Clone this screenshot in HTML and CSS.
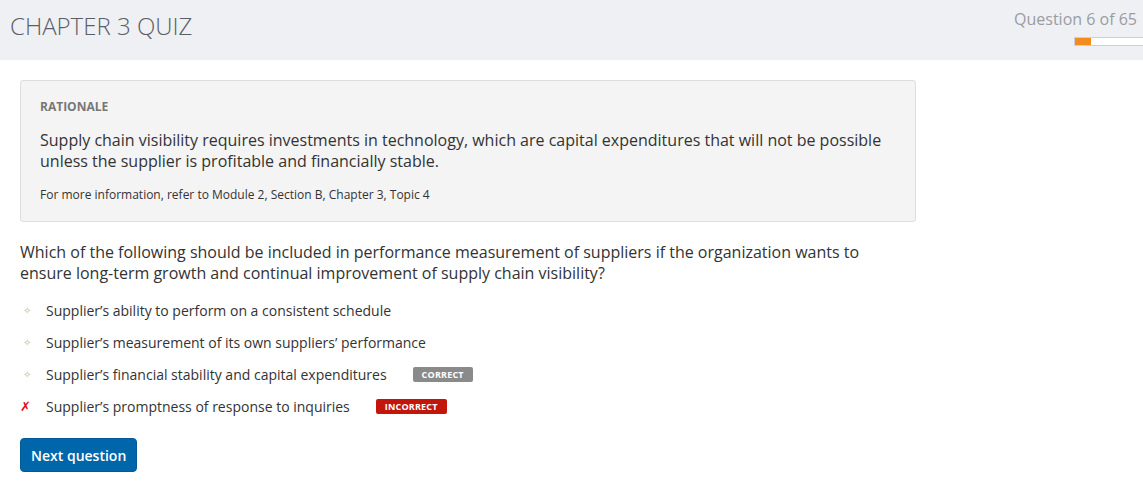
FILE: index.html
```html
<!DOCTYPE html>
<html>
<head>
<meta charset="utf-8">
<link rel="stylesheet" href="styles.css">
</head>
<body>
<header class="topbar">
  <h1 class="title">CHAPTER 3 QUIZ</h1>
  <div class="progress-wrap">
    <div class="progress-label">Question 6 of 65</div>
    <div class="progress"><div class="progress-fill" style="width:16px"></div></div>
  </div>
</header>
<main class="content">
  <section class="rationale">
    <div class="rationale-head">RATIONALE</div>
    <p class="rationale-text">Supply chain visibility requires investments in technology, which are capital expenditures that will not be possible unless the supplier is profitable and financially stable.</p>
    <p class="rationale-ref">For more information, refer to Module 2, Section B, Chapter 3, Topic 4</p>
  </section>
  <p class="question">Which of the following should be included in performance measurement of suppliers if the organization wants to ensure long-term growth and continual improvement of supply chain visibility?</p>
  <ul class="options">
    <li class="option"><span class="mark dot">&#x2727;</span><span class="opt-text">Supplier’s ability to perform on a consistent schedule</span></li>
    <li class="option"><span class="mark dot">&#x2727;</span><span class="opt-text">Supplier’s measurement of its own suppliers’ performance</span></li>
    <li class="option"><span class="mark dot">&#x2727;</span><span class="opt-text">Supplier’s financial stability and capital expenditures</span><span class="badge badge-correct">CORRECT</span></li>
    <li class="option"><span class="mark cross">&#x2717;</span><span class="opt-text">Supplier’s promptness of response to inquiries</span><span class="badge badge-incorrect">INCORRECT</span></li>
  </ul>
  <button class="next-btn">Next question</button>
</main>
</body>
</html>
```
FILE: styles.css
```css
html, body {
  margin: 0;
  padding: 0;
  background: #ffffff;
  font-family: "Open Sans", "Liberation Sans", sans-serif;
  color: #333333;
}
.topbar {
  height: 60px;
  background: #eff0f4;
  display: flex;
  justify-content: space-between;
  align-items: flex-start;
}
.title {
  margin: 0;
  padding: 9px 0 0 10px;
  font-size: 24px;
  font-weight: 300;
  color: #5a5e66;
  line-height: 34px;
}
.progress-wrap {
  display: flex;
  flex-direction: column;
  align-items: flex-end;
  padding-top: 8px;
}
.progress-label {
  font-size: 16px;
  font-weight: 400;
  color: #9a9ca2;
  line-height: 22px;
  padding-right: 6px;
}
.progress {
  margin-top: 7px;
  width: 68px;
  height: 7px;
  background: #ffffff;
  border: 1px solid #cfd0d2;
  border-right: none;
}
.progress-fill {
  height: 100%;
  background: #f28c1e;
}
.content {
  padding: 20px 20px 0 20px;
}
.rationale {
  width: 855px;
  background: #f4f4f4;
  border: 1px solid #dedede;
  border-radius: 3px;
  padding: 16px 20px 16px 19px;
}
.rationale-head {
  font-size: 12px;
  font-weight: 700;
  color: #777777;
  line-height: 20px;
}
.rationale-text {
  margin: 13px 0 0 0;
  font-size: 16px;
  line-height: 21px;
  color: #333333;
}
.rationale-ref {
  margin: 13px 0 0 0;
  font-size: 12px;
  line-height: 20px;
  color: #333333;
}
.question {
  margin: 20px 0 0 0;
  font-size: 16px;
  line-height: 21px;
  width: 860px;
  color: #333333;
}
.options {
  list-style: none;
  margin: 10px 0 0 0;
  padding: 0;
}
.option {
  display: flex;
  align-items: center;
  height: 32px;
  font-size: 14px;
}
.mark {
  width: 26px;
  flex: none;
  font-size: 10px;
}
.dot {
  color: #b8b8b8;
  padding-left: 3px;
  width: 23px;
}
.cross {
  color: #e01010;
  font-size: 13px;
  font-weight: 700;
  font-style: italic;
  font-family: "DejaVu Sans", sans-serif;
}
.opt-text {
  color: #333333;
}
.badge {
  margin-left: 26px;
  font-size: 9px;
  font-weight: 700;
  color: #ffffff;
  line-height: 15px;
  padding: 0 9px;
  border-radius: 2px;
  letter-spacing: 0.2px;
}
.badge-correct {
  background: #8a8a8a;
}
.badge-incorrect {
  background: #c2160a;
}
.next-btn {
  margin-top: 16px;
  background: #0066aa;
  color: #ffffff;
  border: 1px solid #005a96;
  border-radius: 4px;
  font-family: "Open Sans", "Liberation Sans", sans-serif;
  font-size: 14px;
  font-weight: 600;
  height: 34px;
  padding: 0 10px;
  cursor: pointer;
}
```
